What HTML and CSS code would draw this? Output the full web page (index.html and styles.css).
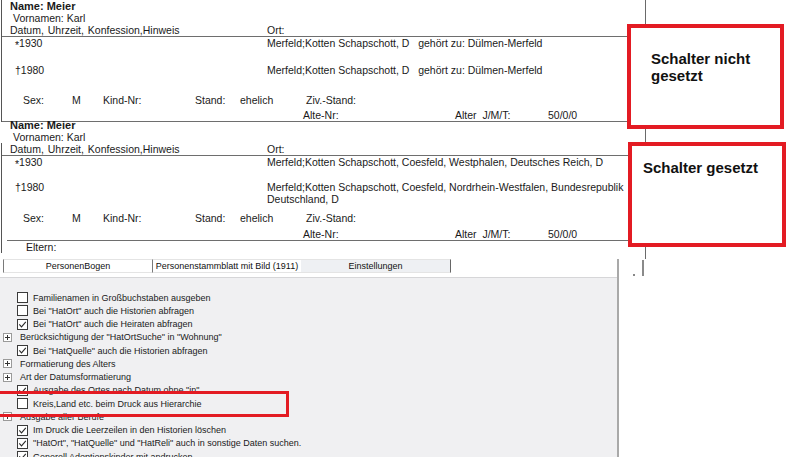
FILE: index.html
```html
<!DOCTYPE html>
<html lang="de">
<head>
<meta charset="utf-8">
<title>PersonenBogen – Einstellungen</title>
<link rel="stylesheet" href="styles.css">
</head>
<body>
<div class="sheet">
  <section class="rec rec1">
    <div class="row name">Name: Meier</div>
    <div class="row vorn">Vornamen: Karl</div>
    <div class="row head"><span class="c-head">Datum, Uhrzeit, Konfession,Hinweis</span><span>Ort:</span></div>
    <div class="rule"></div>
    <div class="events ev-a">
      <div class="row ev"><span class="c-date"><span class="star">*</span>1930</span><span class="place">Merfeld;Kotten Schapschott, D&nbsp;&nbsp; gehört zu: Dülmen-Merfeld</span></div>
      <div class="row ev ev2"><span class="c-date">†1980</span><span class="place">Merfeld;Kotten Schapschott, D&nbsp;&nbsp; gehört zu: Dülmen-Merfeld</span></div>
    </div>
    <div class="row facts"><span class="f-sex">Sex:</span><span class="f-m">M</span><span class="f-kind">Kind-Nr:</span><span class="f-stand">Stand:</span><span class="f-ehe">ehelich</span><span>Ziv.-Stand:</span></div>
    <div class="row facts2"><span class="f-alte">Alte-Nr:</span><span class="f-alter">Alter&nbsp; J/M/T:</span><span>50/0/0</span></div>
    <div class="rule"></div>
  </section>
  <section class="rec rec2">
    <div class="row name">Name: Meier</div>
    <div class="row vorn">Vornamen: Karl</div>
    <div class="body">
      <div class="row head"><span class="c-head">Datum, Uhrzeit, Konfession,Hinweis</span><span>Ort:</span></div>
      <div class="rule"></div>
      <div class="events ev-b">
        <div class="row ev"><span class="c-date"><span class="star">*</span>1930</span><span class="place">Merfeld;Kotten Schapschott, Coesfeld, Westphalen, Deutsches Reich, D</span></div>
        <div class="row ev ev2b"><span class="c-date">†1980</span><span class="place">Merfeld;Kotten Schapschott, Coesfeld, Nordrhein-Westfalen, Bundesrepublik<br>Deutschland, D</span></div>
      </div>
      <div class="row facts"><span class="f-sex">Sex:</span><span class="f-m">M</span><span class="f-kind">Kind-Nr:</span><span class="f-stand">Stand:</span><span class="f-ehe">ehelich</span><span>Ziv.-Stand:</span></div>
      <div class="row facts2 f2b"><span class="f-alte">Alte-Nr:</span><span class="f-alter">Alter&nbsp; J/M/T:</span><span>50/0/0</span></div>
      <div class="rule rule-inset"></div>
      <div class="row eltern">Eltern:</div>
    </div>
  </section>
</div>

<div class="lower">
  <div class="tabs">
    <div class="tab tab1">PersonenBogen</div>
    <div class="tab tab2">Personenstammblatt mit Bild (1911)</div>
    <div class="tab tab3">Einstellungen</div>
  </div>
  <div class="panel">
    <div class="item cb"><svg class="chk" width="11" height="11" viewBox="0 0 11 11"><rect x="0.5" y="0.5" width="10" height="10"/></svg>Familienamen in Großbuchstaben ausgeben</div>
    <div class="item cb"><svg class="chk" width="11" height="11" viewBox="0 0 11 11"><rect x="0.5" y="0.5" width="10" height="10"/></svg>Bei "HatOrt" auch die Historien abfragen</div>
    <div class="item cb"><svg class="chk" width="11" height="11" viewBox="0 0 11 11"><rect x="0.5" y="0.5" width="10" height="10"/><path d="M2.3 5.4 L4.5 7.8 L8.8 2.8"/></svg>Bei "HatOrt" auch die Heiraten abfragen</div>
    <div class="item grp"><svg class="plus" width="9" height="9" viewBox="0 0 9 9"><rect x="0.5" y="0.5" width="8" height="8"/><path d="M2 4.5 H7 M4.5 2 V7"/></svg>Berücksichtigung der "HatOrtSuche" in "Wohnung"</div>
    <div class="item cb"><svg class="chk" width="11" height="11" viewBox="0 0 11 11"><rect x="0.5" y="0.5" width="10" height="10"/><path d="M2.3 5.4 L4.5 7.8 L8.8 2.8"/></svg>Bei "HatQuelle" auch die Historien abfragen</div>
    <div class="item grp"><svg class="plus" width="9" height="9" viewBox="0 0 9 9"><rect x="0.5" y="0.5" width="8" height="8"/><path d="M2 4.5 H7 M4.5 2 V7"/></svg>Formatierung des Alters</div>
    <div class="item grp"><svg class="plus" width="9" height="9" viewBox="0 0 9 9"><rect x="0.5" y="0.5" width="8" height="8"/><path d="M2 4.5 H7 M4.5 2 V7"/></svg>Art der Datumsformatierung</div>
    <div class="item cb"><svg class="chk" width="11" height="11" viewBox="0 0 11 11"><rect x="0.5" y="0.5" width="10" height="10"/><path d="M2.3 5.4 L4.5 7.8 L8.8 2.8"/></svg>Ausgabe des Ortes nach Datum ohne "in"</div>
    <div class="item cb"><svg class="chk" width="11" height="11" viewBox="0 0 11 11"><rect x="0.5" y="0.5" width="10" height="10"/></svg>Kreis,Land etc. beim Druck aus Hierarchie</div>
    <div class="item grp"><svg class="plus" width="9" height="9" viewBox="0 0 9 9"><rect x="0.5" y="0.5" width="8" height="8"/><path d="M2 4.5 H7 M4.5 2 V7"/></svg>Ausgabe aller Berufe</div>
    <div class="item cb"><svg class="chk" width="11" height="11" viewBox="0 0 11 11"><rect x="0.5" y="0.5" width="10" height="10"/><path d="M2.3 5.4 L4.5 7.8 L8.8 2.8"/></svg>Im Druck die Leerzeilen in den Historien löschen</div>
    <div class="item cb"><svg class="chk" width="11" height="11" viewBox="0 0 11 11"><rect x="0.5" y="0.5" width="10" height="10"/><path d="M2.3 5.4 L4.5 7.8 L8.8 2.8"/></svg>"HatOrt", "HatQuelle" und "HatReli" auch in sonstige Daten suchen.</div>
    <div class="item cb"><svg class="chk" width="11" height="11" viewBox="0 0 11 11"><rect x="0.5" y="0.5" width="10" height="10"/><path d="M2.3 5.4 L4.5 7.8 L8.8 2.8"/></svg>Generell Adoptionskinder mit andrucken</div>
  </div>
</div>

<div class="note note1">Schalter nicht<br>gesetzt</div>
<div class="note note2">Schalter gesetzt</div>
<div class="highlight"></div>
<div class="mark-dot"></div>
<div class="mark-bar"></div>
</body>
</html>
```

FILE: styles.css
```css
html, body {
  margin: 0;
  padding: 0;
  background: #ffffff;
}
body {
  width: 794px;
  height: 457px;
  overflow: hidden;
  position: relative;
  font-family: "Liberation Sans", Arial, sans-serif;
  color: #1a1a1a;
}

/* ---------- upper record sheet ---------- */
.sheet {
  width: 646px;
  height: 259px;
  box-sizing: border-box;
  border-right: 1px solid #6a6a6a;
  font-size: 10.5px;
  line-height: 12px;
}
.rec {
  margin-left: 2px;
}
.rec1 {
  margin-left: 1px;
  border-left: 1px solid #555;
}
.rec2 {
  margin-top: -3px;
}
.rec2 .body {
  margin-left: -1px;
  border-left: 1px solid #555;
}
.row {
  display: flex;
  height: 12px;
  white-space: nowrap;
}
.row > span {
  flex: none;
}
.name {
  padding-left: 8px;
  font-weight: bold;
  font-size: 11px;
}
.vorn {
  padding-left: 11px;
}
.head {
  padding-left: 8px;
  word-spacing: 1px;
}
.c-head {
  width: 257px;
}
.rule {
  height: 1px;
  background: #6e6e6e;
}
.rule-inset {
  margin-left: 5px;
}
.events.ev-a {
  height: 57px;
}
.events.ev-b {
  height: 56px;
}
.ev {
  padding-left: 13px;
}
.ev2 {
  margin-top: 15px;
}
.ev2b {
  margin-top: 13px;
  height: 24px;
}
.c-date {
  width: 252px;
}
.star {
  display: inline-block;
  vertical-align: -2px;
}
.place {
  white-space: nowrap;
}
.facts {
  padding-left: 21px;
}
.f-sex { width: 49px; }
.f-m { width: 31px; }
.f-kind { width: 92px; }
.f-stand { width: 45px; }
.f-ehe { width: 66px; }
.facts2 {
  margin-top: 3px;
  padding-left: 301px;
}
.f2b {
  margin-top: 4px;
}
.f-alte { width: 152px; }
.f-alter { width: 93px; }
.eltern {
  padding-left: 24px;
}

/* ---------- lower settings window ---------- */
.lower {
  width: 617px;
  height: 198px;
  border-right: 2px solid #a9a9a9;
  overflow: hidden;
}
.tabs {
  display: flex;
  margin-left: 3px;
  height: 14px;
}
.tab {
  box-sizing: border-box;
  height: 14px;
  border-top: 1px solid #e4e4e4;
  border-bottom: 1px solid #e4e4e4;
  font-size: 9px;
  line-height: 12px;
  text-align: center;
  color: #111;
  white-space: nowrap;
  background: #ffffff;
}
.tab1 {
  width: 149px;
  border-left: 1px solid #7a7a7a;
}
.tab2 {
  width: 149px;
  border-left: 1px solid #7a7a7a;
}
.tab3 {
  width: 150px;
  background: #eef0f3;
  border-right: 1px solid #666;
}
.panel {
  margin-top: 4px;
  height: 180px;
  box-sizing: border-box;
  border-top: 1px solid #d6d6d8;
  background: #f0f0f2;
  padding-top: 13px;
}
.item {
  display: flex;
  align-items: center;
  height: 13.25px;
  font-size: 9px;
  color: #1a1a1a;
  white-space: nowrap;
}
.item.cb {
  padding-left: 17px;
}
.item.grp {
  padding-left: 3px;
}
.chk {
  flex: none;
  margin-right: 5px;
}
.chk rect {
  fill: #ffffff;
  stroke: #3a3a3a;
  stroke-width: 1;
}
.chk path {
  fill: none;
  stroke: #2a2a2a;
  stroke-width: 1.1;
}
.plus {
  flex: none;
  margin-right: 8px;
}
.plus rect {
  fill: #ffffff;
  stroke: #9a9a9a;
  stroke-width: 1;
}
.plus path {
  fill: none;
  stroke: #333;
  stroke-width: 1;
}

/* ---------- annotation overlays ---------- */
.note {
  position: absolute;
  box-sizing: border-box;
  background: #ffffff;
  border: 4px solid #e31b23;
  font-weight: bold;
  font-size: 15px;
  line-height: 17px;
  color: #111;
}
.note1 {
  left: 627px;
  top: 24px;
  width: 157px;
  height: 105px;
  padding: 22px 0 0 20px;
}
.note2 {
  left: 628px;
  top: 142px;
  width: 158px;
  height: 105px;
  padding: 13px 0 0 11px;
}
.highlight {
  position: absolute;
  left: -4px;
  top: 391px;
  width: 293px;
  height: 26px;
  box-sizing: border-box;
  border: 3px solid #e31b23;
}
.mark-dot {
  position: absolute;
  left: 633px;
  top: 274px;
  width: 2px;
  height: 2px;
  background: #888;
}
.mark-bar {
  position: absolute;
  left: 642px;
  top: 260px;
  width: 2px;
  height: 16px;
  background: #8a8a8a;
}
```
